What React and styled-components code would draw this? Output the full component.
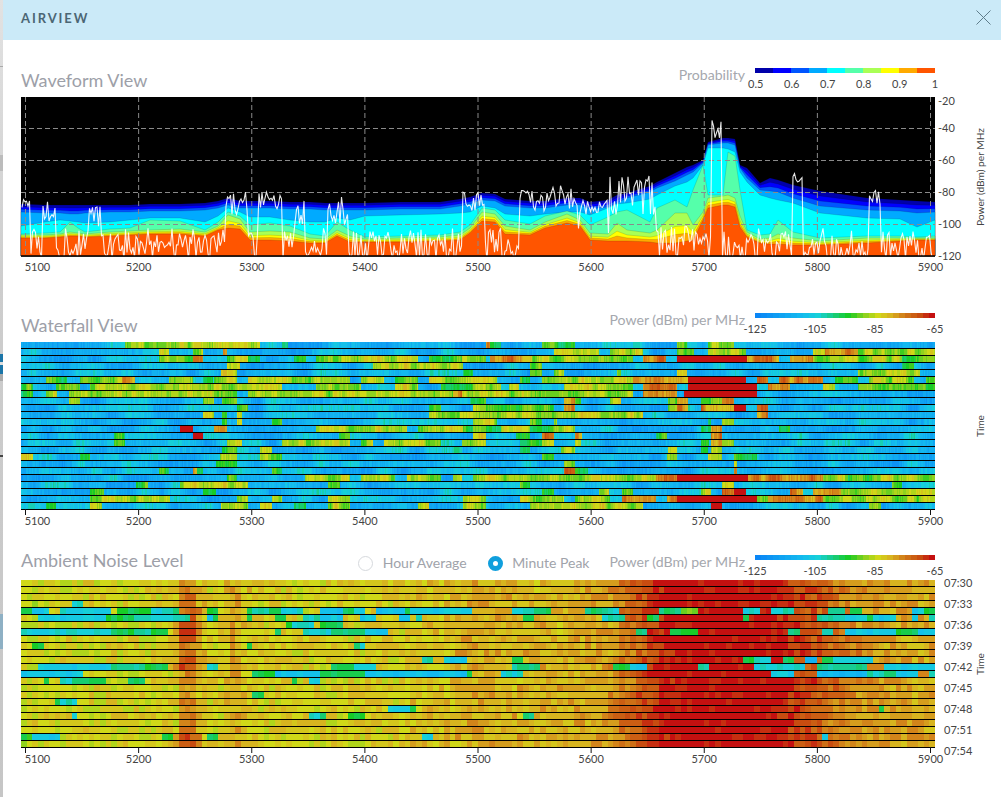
import React from 'react';
import styled, { createGlobalStyle } from 'styled-components';

const GlobalStyle = createGlobalStyle`
  html, body {
    margin: 0;
    background: #fff;
    overflow: hidden;
  }
  body {
    font-family: Lato, "Open Sans", sans-serif;
  }
`;

const Page = styled.div`
  display: flex;
  width: 1001px;
  height: 797px;
  overflow: hidden;
`;

const Backdrop = styled.div`
  width: 3px;
  flex: none;
  display: flex;
  flex-direction: column;
  background: linear-gradient(#e2e2e2, #cdcdcd 35%, #c6c6c6);
`;

const BackdropMark = styled.div`
  height: ${(p) => p.$h}px;
  flex: none;
  background: ${(p) => p.$c || 'transparent'};
`;

const Modal = styled.div`
  flex: 1;
  background: #fff;
`;

const TopBar = styled.header`
  height: 40px;
  box-sizing: border-box;
  display: flex;
  align-items: center;
  justify-content: space-between;
  padding: 0 10px 5px 18px;
  background: #cbeaf8;
`;

const TopTitle = styled.h1`
  margin: 0;
  font-size: 13px;
  font-weight: 700;
  letter-spacing: 1.9px;
  color: #4b6674;
`;

const CloseIcon = styled.svg`
  width: 15px;
  height: 15px;
  stroke: #5f7d8b;
  stroke-width: 1;
  fill: none;
  display: block;
`;

const Section = styled.section`
  padding-left: 18px;
  padding-top: ${(p) => p.$top}px;
`;

const SectionHead = styled.div`
  width: 914px;
  height: ${(p) => p.$h}px;
  display: flex;
  align-items: flex-start;
`;

const SectionTitle = styled.h2`
  flex: 1;
  align-self: flex-end;
  margin: 0 0 ${(p) => p.$low}px;
  font-size: 18px;
  line-height: 22px;
  font-weight: 400;
  color: #9da0a8;
`;

const RadioGroup = styled.div`
  align-self: flex-end;
  display: flex;
  align-items: center;
  margin: 0 20px 9px 0;
`;

const RadioLabel = styled.label`
  display: flex;
  align-items: center;
  gap: 9.5px;
  margin-left: 21px;
  font-size: 14px;
  line-height: 16px;
  color: #a0a3aa;
`;

const RadioDot = styled.span`
  width: 15px;
  height: 15px;
  box-sizing: border-box;
  border-radius: 50%;
  background: #fff;
  border: ${(p) => (p.$on ? '5px solid #109fdd' : '1px solid #d6d9dd')};
`;

const LegendCaption = styled.span`
  margin-right: 10px;
  font-size: 14.1px;
  line-height: 14px;
  color: #a5a8ae;
`;

const Legend = styled.div`
  width: 180px;
  flex: none;
  display: flex;
  flex-direction: column;
  gap: 4px;
`;

const LegendBar = styled.div`
  display: flex;
  height: 5px;
`;

const LegendStep = styled.span`
  flex: 1;
  background: ${(p) => p.$c};
`;

const LegendTicks = styled.div`
  display: flex;
  justify-content: space-between;
  margin: 0 -${(p) => p.$w / 2}px;
`;

const LegendTick = styled.span`
  width: ${(p) => p.$w}px;
  text-align: center;
  font-size: 11px;
  line-height: 14px;
  color: #444;
`;

const ChartSvg = styled.svg`
  display: block;
  width: 970px;
  height: 190px;
  overflow: visible;
`;

const AxisText = styled.text`
  font-size: ${(p) => p.$size || 11}px;
  fill: #444;
  text-anchor: ${(p) => p.$anchor || 'middle'};
  dominant-baseline: middle;
`;

const noise = (a, b = 0) => {
  const v = Math.sin(a * 127.1 + b * 311.7 + 17.3) * 43758.5453;
  return v - Math.floor(v);
};

const smooth = (x, size, seed) => {
  const p = x / size;
  const i = Math.floor(p);
  const f = p - i;
  const s = f * f * (3 - 2 * f);
  return noise(i, seed) * (1 - s) + noise(i + 1, seed) * s;
};

const lerpPoints = (pts, x) => {
  if (x <= pts[0][0]) return pts[0][1];
  for (let i = 1; i < pts.length; i += 1) {
    if (x <= pts[i][0]) {
      const [x0, y0] = pts[i - 1];
      const [x1, y1] = pts[i];
      return y0 + ((y1 - y0) * (x - x0)) / (x1 - x0);
    }
  }
  return pts[pts.length - 1][1];
};

const hex = (c) => [1, 3, 5].map((i) => parseInt(c.slice(i, i + 2), 16));

const heatStops = [
  [0, '#0a86f6'], [7.5, '#14bcee'], [10, '#16d0d8'], [13, '#18cc70'], [15.2, '#18cc20'],
  [17.5, '#80d020'], [20, '#d0d818'], [22.2, '#d8b020'], [24.5, '#d07818'], [27, '#c84c10'],
  [29, '#c41010'],
];

const HEAT = Array.from({ length: 30 }, (_, i) => {
  let k = 1;
  while (k < heatStops.length - 1 && heatStops[k][0] < i) k += 1;
  const [a, ca] = heatStops[k - 1];
  const [b, cb] = heatStops[k];
  const t = (i - a) / (b - a);
  const [c0, c1] = [hex(ca), hex(cb)];
  return `rgb(${c0.map((v, j) => Math.round(v + (c1[j] - v) * t)).join(',')})`;
});

const PROB = ['#0000aa', '#0000ff', '#0055ff', '#00aaff', '#00ffff', '#55ffaa', '#aaff55', '#ffff00', '#ffaa00', '#ff5500'];

const LEVEL = { t: 10.5, g: 15.5, y: 18.5, o: 24, r: 28.6, c: 8.5 };

// [from px, to px, level] per row, everything else is the cold background
const waterfallRows = [
  [[124, 259, 'y'], [282, 287, 'g'], [485, 490, 'o'], [490, 500, 'g'], [542, 575, 'g'], [632, 642, 't'], [677, 687, 'g'], [707, 733, 'y']],
  [[158, 169, 'y'], [192, 203, 'y'], [223, 226, 'o'], [553, 598, 'y'], [610, 643, 'y'], [677, 693, 'g'], [707, 745, 'y'], [812, 825, 'y'], [825, 857, 'o'], [857, 935, 'y']],
  [[158, 169, 'y'], [169, 192, 'g'], [192, 203, 'o'], [226, 248, 'y'], [248, 259, 'g'], [293, 305, 'g'], [316, 417, 'y'], [429, 462, 'g'], [462, 485, 'y'], [490, 532, 'o'], [532, 632, 'y'], [643, 665, 'o'], [677, 747, 'r'], [747, 778, 'o'], [790, 812, 'o'], [812, 902, 'y'], [902, 935, 'g']],
  [[226, 240, 'y'], [372, 463, 'y'], [530, 542, 'y'], [902, 913, 'g']],
  [[221, 237, 'y'], [463, 473, 'g'], [530, 542, 'g'], [553, 563, 'y'], [617, 620, 'y'], [677, 687, 'y'], [857, 920, 'y']],
  [[45, 67, 'g'], [79, 100, 'g'], [100, 121, 'y'], [121, 135, 'o'], [169, 192, 'y'], [203, 213, 'g'], [214, 237, 'y'], [248, 350, 'y'], [361, 383, 'y'], [395, 417, 'g'], [429, 497, 'y'], [519, 530, 'g'], [542, 632, 'y'], [632, 655, 'o'], [655, 677, 'o'], [677, 688, 'o'], [688, 745, 'r'], [757, 767, 'o'], [778, 823, 'o'], [835, 858, 'g'], [869, 913, 'y'], [925, 935, 'y']],
  [[21, 33, 'g'], [56, 79, 'y'], [90, 282, 'y'], [316, 361, 'y'], [395, 417, 'y'], [440, 473, 'g'], [473, 500, 'y'], [508, 518, 'y'], [563, 620, 'y'], [620, 632, 'g'], [643, 677, 'o'], [688, 757, 'r'], [767, 790, 'o'], [823, 835, 'y'], [858, 925, 'y'], [925, 935, 'g']],
  [[21, 33, 'g'], [45, 57, 'y'], [68, 237, 'y'], [248, 452, 'y'], [452, 462, 'o'], [462, 632, 'y'], [643, 677, 'o'], [683, 757, 'r']],
  [[68, 79, 'g'], [203, 214, 'y'], [222, 237, 'g'], [470, 485, 'g'], [563, 575, 'o'], [575, 580, 'g'], [610, 620, 'y'], [667, 677, 'g'], [677, 688, 'o'], [700, 710, 'g'], [711, 722, 'y'], [722, 733, 'o']],
  [[237, 248, 'g'], [429, 440, 'g'], [473, 485, 'y'], [485, 500, 'g'], [500, 553, 'g'], [563, 575, 'o'], [667, 677, 'y'], [677, 688, 'o'], [700, 733, 'o'], [733, 745, 'r'], [757, 767, 'o']],
  [[203, 214, 'y'], [222, 226, 'g'], [237, 241, 'y'], [429, 643, 'y'], [757, 767, 'o']],
  [[222, 226, 'g'], [237, 241, 'y'], [271, 282, 'g'], [473, 497, 'y'], [530, 542, 'g'], [553, 557, 'y'], [707, 711, 'g'], [722, 733, 'y']],
  [[180, 192, 'r'], [214, 226, 'o'], [316, 406, 'y'], [417, 463, 'y'], [463, 473, 'g'], [473, 485, 'y'], [485, 500, 'g'], [500, 530, 'y'], [530, 553, 'g'], [553, 575, 'y'], [700, 710, 'g'], [711, 722, 'o'], [778, 790, 'g']],
  [[192, 203, 'r'], [113, 124, 'g'], [338, 350, 'g'], [473, 485, 'y'], [516, 530, 'g'], [542, 553, 'o'], [575, 582, 'o'], [655, 666, 'g'], [711, 722, 'o']],
  [[113, 124, 'g'], [226, 241, 'y'], [282, 350, 'y'], [361, 372, 'y'], [383, 440, 'y'], [462, 485, 'y'], [519, 542, 'g'], [542, 553, 'y'], [575, 580, 'y'], [700, 708, 'g'], [711, 722, 'o'], [722, 733, 'y']],
  [[222, 237, 'g'], [259, 271, 'y'], [452, 462, 't'], [519, 530, 'g'], [560, 575, 'y'], [667, 677, 'y'], [700, 707, 'g'], [711, 722, 'y']],
  [[21, 33, 'y'], [79, 90, 'g'], [220, 237, 'y'], [259, 282, 'y'], [542, 553, 'g'], [666, 677, 'y'], [707, 722, 'y'], [733, 757, 'g']],
  [[215, 237, 'g'], [563, 575, 'y'], [733, 737, 'y']],
  [[158, 169, 'g'], [192, 197, 'o'], [197, 203, 'g'], [271, 282, 'g'], [563, 575, 'o'], [575, 587, 'g'], [733, 737, 'o']],
  [[226, 237, 'g'], [304, 350, 'y'], [361, 395, 'y'], [406, 440, 'y'], [452, 462, 'y'], [473, 655, 'y'], [655, 677, 'o'], [677, 748, 'r'], [748, 823, 'o'], [823, 847, 'y'], [847, 880, 'g'], [880, 935, 'y']],
  [[136, 147, 'g'], [180, 248, 'y'], [327, 339, 'g'], [519, 530, 'g'], [722, 733, 'y'], [892, 902, 'g']],
  [[90, 103, 'g'], [203, 215, 'g'], [542, 553, 'g'], [598, 609, 'y'], [621, 632, 'g'], [700, 711, 'y'], [722, 733, 'o'], [733, 745, 'r'], [790, 802, 'o'], [812, 840, 'o'], [840, 935, 'y']],
  [[90, 170, 'y'], [237, 248, 'y'], [271, 282, 'y'], [327, 350, 'y'], [463, 485, 'y'], [519, 563, 'y'], [575, 610, 'y'], [621, 655, 'o'], [666, 677, 'o'], [677, 757, 'r'], [757, 767, 'y'], [767, 823, 'o'], [823, 935, 'y']],
  [[45, 56, 'g'], [90, 102, 'y'], [221, 248, 'y'], [259, 271, 'y'], [293, 305, 'g'], [327, 350, 'y'], [417, 429, 'y'], [463, 485, 'y'], [530, 643, 'y'], [711, 722, 'r'], [869, 880, 'y']],
];

// overrides on the warm background of the ambient chart: [from px, to px, level index]
const ambientCold = {
  3: [[67, 78, 10], [78, 83, 14]],
  4: [[21, 32, 14], [32, 44, 9], [55, 65, 11], [65, 110, 9], [112, 146, 14], [146, 170, 10], [170, 176, 14], [203, 213, 14], [242, 248, 14], [250, 265, 11], [265, 275, 14], [275, 300, 10], [315, 337, 8], [337, 350, 14], [350, 360, 9], [373, 400, 8], [400, 405, 14], [407, 470, 9], [510, 530, 11], [530, 547, 13], [583, 600, 13], [600, 617, 11], [657, 680, 13], [680, 697, 17], [742, 760, 10], [770, 793, 11], [827, 840, 11], [850, 860, 14], [907, 920, 9], [920, 930, 14]],
  5: [[33, 38, 11], [38, 100, 9], [100, 130, 14], [130, 160, 10], [160, 190, 11], [203, 210, 9], [210, 217, 14], [242, 248, 14], [270, 285, 14], [300, 316, 11], [316, 340, 9], [355, 372, 9], [396, 407, 9], [412, 420, 11], [520, 532, 14], [600, 622, 11], [647, 657, 14], [742, 748, 14], [815, 840, 11], [843, 862, 9], [862, 872, 14], [872, 895, 9], [907, 918, 9], [925, 935, 11]],
  6: [[283, 290, 14], [288, 313, 10], [316, 338, 14]],
  7: [[21, 32, 11], [32, 106, 10], [106, 130, 14], [130, 146, 11], [146, 165, 14], [272, 280, 14], [298, 330, 10], [330, 360, 12], [360, 385, 9], [633, 640, 14], [640, 645, 11], [668, 697, 15], [700, 703, 14], [783, 798, 12], [817, 833, 11], [843, 895, 9], [895, 917, 14], [918, 935, 9]],
  8: [[38, 43, 14]],
  9: [[32, 38, 14], [38, 43, 10], [242, 248, 14], [350, 355, 14], [355, 362, 9]],
  11: [[418, 430, 11], [441, 463, 9], [510, 520, 14], [742, 752, 14], [752, 770, 10], [782, 793, 13], [805, 815, 7], [817, 830, 14], [830, 872, 10]],
  12: [[33, 110, 9], [110, 145, 12], [145, 165, 14], [203, 213, 11], [328, 350, 14], [350, 373, 10], [510, 537, 12], [612, 625, 14], [625, 645, 9], [697, 708, 11], [753, 800, 10], [815, 867, 12], [883, 930, 9]],
  13: [[21, 78, 9], [250, 270, 14], [270, 317, 8], [317, 338, 14], [338, 362, 15], [362, 463, 8], [463, 469, 14], [500, 520, 10], [770, 793, 9], [815, 863, 7], [863, 883, 11], [883, 895, 14], [895, 918, 9], [925, 935, 11]],
  14: [[38, 44, 14], [55, 70, 11], [70, 100, 14], [123, 145, 14], [288, 293, 14], [305, 316, 9]],
  16: [[248, 259, 14]],
  17: [[50, 60, 14], [60, 72, 11]],
  18: [[384, 407, 9], [407, 412, 14], [873, 883, 14]],
  19: [[67, 72, 11], [72, 77, 9], [305, 316, 10], [316, 322, 14], [345, 362, 14], [520, 532, 13]],
  22: [[21, 32, 15], [32, 55, 9], [55, 60, 14], [157, 169, 14], [203, 213, 14], [418, 430, 10], [817, 827, 9]],
};

const ambientBase = [
  [21, 20], [150, 20.3], [170, 21], [174, 24], [180, 27.5], [192, 27.5], [198, 23], [205, 20.3], [222, 21],
  [230, 23], [245, 21], [300, 20.5], [400, 21], [440, 21.5], [470, 22.5], [500, 22], [560, 22], [610, 23],
  [630, 25.5], [650, 27.5], [668, 29.5], [770, 29.5], [790, 28], [815, 26.5], [840, 24.5], [870, 23], [935, 22.5],
];

const clampIndex = (v) => Math.max(0, Math.min(29, Math.round(v)));

const waterfallCell = (row, x) => {
  const seg = waterfallRows[row].find(([a, b]) => x >= a && x < b);
  const grain = noise(x, row + 3) - 0.5;
  if (!seg) {
    return clampIndex(2.5 + smooth(x, 16, row + 40) * 8 + grain * 3);
  }
  const lvl = LEVEL[seg[2]];
  if (seg[2] === 'r') return clampIndex(29);
  const block = smooth(x, 7, row + 80) - 0.5;
  return clampIndex(lvl + block * 5.5 + grain * 2);
};

const ambientCell = (row, x) => {
  const seg = (ambientCold[row] || []).find(([a, b]) => x >= a && x < b);
  const grain = noise(x, row + 91) - 0.5;
  if (seg) return clampIndex(seg[2] + grain * 2);
  const edge = (smooth(row, 2, 5) - 0.5) * 26;
  const base = lerpPoints(ambientBase, x + (x > 600 ? edge : 0));
  // the 5240 column is not equally hot in every row
  const cool = x > 172 && x < 198 ? noise(row, 3) * 4 : 0;
  return clampIndex(base - cool + grain * 3.2);
};

// one path per colour, a lot lighter than a rect per cell
const buildHeatPaths = (cols, cellWidth, cellFor) => {
  const paths = {};
  for (let row = 0; row < 24; row += 1) {
    let start = 0;
    let current = cellFor(row, 21);
    for (let c = 1; c <= cols; c += 1) {
      const x = 21 + c * cellWidth;
      const next = c < cols ? cellFor(row, x) : -1;
      if (next !== current) {
        const x0 = Math.round(21 + start * cellWidth);
        const w = Math.round(x) - x0;
        if (w > 0) {
          paths[current] = `${paths[current] || ''}M${x0} ${row * 7}h${w}v6h-${w}z`;
        }
        start = c;
        current = next;
      }
    }
  }
  return Object.entries(paths);
};

const waterfallPaths = buildHeatPaths(808, 914 / 808, waterfallCell);
const ambientPaths = buildHeatPaths(162, 914 / 162, ambientCell);

// x, then tops of: dark blue, #00aaff, cyan, #55ffaa, #aaff55, #ff5500
const waveBands = [
  [21, 204, 212, 226, 234, 235, 238], [45, 205, 213, 222, 233, 235, 238], [60, 205, 213, 220, 232, 234, 237],
  [70, 205, 214, 221, 222, 232, 236], [78, 205, 214, 222, 228, 233, 236], [85, 205, 213, 223, 232, 234, 237],
  [110, 205, 212, 222, 229, 232, 236], [130, 205, 212, 220, 228, 231, 235], [150, 204, 211, 218, 220, 230, 234],
  [180, 204, 211, 218, 221, 229, 234], [205, 203, 210, 222, 230, 232, 236], [218, 201, 208, 216, 222, 226, 230],
  [228, 198, 205, 208, 212, 215, 228], [240, 201, 208, 212, 216, 219, 229], [250, 201, 208, 217, 225, 232, 240],
  [270, 201, 208, 217, 223, 231, 240], [290, 202, 209, 220, 226, 232, 241], [310, 202, 209, 222, 234, 238, 243],
  [325, 203, 210, 222, 236, 239, 243], [337, 203, 210, 218, 222, 230, 236], [350, 203, 210, 220, 230, 236, 242],
  [365, 203, 210, 216, 237, 239, 242], [400, 202, 209, 215, 236, 238, 242], [440, 202, 209, 214, 235, 237, 241],
  [460, 199, 206, 213, 232, 235, 240], [470, 197, 204, 212, 225, 228, 233], [482, 193, 200, 206, 208, 212, 221],
  [495, 194, 201, 208, 210, 214, 222], [505, 199, 206, 214, 220, 226, 234], [530, 201, 208, 216, 224, 230, 235],
  [545, 201, 208, 214, 216, 222, 228], [567, 198, 205, 212, 211, 214, 223], [580, 198, 205, 212, 215, 220, 226],
  [590, 202, 209, 215, 225, 233, 240], [608, 200, 207, 208, 217, 234, 241], [617, 195, 203, 204, 212, 223, 241],
  [627, 193, 198, 203, 210, 230, 241], [650, 186, 192, 199, 222, 233, 242], [657, 182, 188, 195, 208, 230, 243],
  [675, 173, 181, 186, 200, 213, 243], [687, 167, 175, 182, 207, 213, 241], [693, 165, 172, 178, 190, 225, 240],
  [703, 160, 163, 165, 165, 212, 220], [708, 142, 145, 148, 195, 198, 208], [723, 138, 143, 148, 195, 196, 205],
  [728, 138, 143, 149, 152, 195, 205], [735, 139, 145, 152, 156, 198, 207], [740, 165, 168, 172, 190, 216, 227],
  [747, 168, 178, 182, 230, 232, 237], [760, 183, 190, 195, 235, 239, 243], [770, 178, 191, 198, 234, 238, 244],
  [778, 180, 192, 200, 220, 234, 244], [793, 185, 198, 203, 232, 238, 245], [820, 191, 206, 213, 238, 241, 245],
  [867, 198, 210, 218, 236, 238, 243], [900, 200, 211, 219, 236, 238, 241], [917, 201, 213, 227, 237, 238, 240],
  [935, 202, 212, 220, 236, 238, 240],
];

const bandMix = [
  [0, 0], [0, 1 / 3], [0, 2 / 3], [1, 0], [2, 0], [3, 0], [4, 0], [4, 0.45], [4, 0.72], [4, 1],
];

const bandPolygon = ([from, mix]) => {
  const top = waveBands.map(([x, ...edges]) => {
    let y;
    if (from === 4) y = edges[4] + (edges[5] - edges[4]) * mix;
    else if (from === 0 && mix > 0) y = edges[0] + (edges[1] - edges[0]) * mix;
    else y = edges[from];
    return `${x},${(y - 97).toFixed(1)}`;
  });
  return `21,159 ${top.join(' ')} 935,159`;
};

const peakRanges = [
  [22, 30, 196, 208], [43, 55, 200, 225], [89, 100, 202, 232], [225, 248, 192, 215], [259, 282, 192, 212],
  [294, 304, 198, 225], [327, 348, 195, 225], [463, 485, 192, 212], [520, 578, 185, 212], [580, 608, 200, 215],
  [609, 655, 175, 215], [711, 722, 115, 140], [792, 802, 170, 185], [869, 880, 190, 205],
];

const tracePoints = () => {
  const pts = [];
  for (let x = 22; x < 934; x += 1.5) {
    const peak = peakRanges.find(([a, b]) => x >= a && x <= b);
    const r = noise(x, 7);
    let y;
    if (peak) {
      y = peak[2] + (peak[3] - peak[2]) * r;
    } else if (x > 655 && x < 705) {
      y = 226 + r * 30;
    } else {
      y = 228 + r * 34;
    }
    pts.push(`${x.toFixed(1)},${(y - 97).toFixed(1)}`);
  }
  return pts.join(' ');
};

const trace = tracePoints();

const FREQS = [5100, 5200, 5300, 5400, 5500, 5600, 5700, 5800, 5900];
const freqX = (f) => 25.5 + (f - 5100) * 1.13125;

const FreqAxis = ({ y, ticks }) => (
  <>
    {ticks && FREQS.map((f) => (
      <line key={f} x1={freqX(f)} x2={freqX(f)} y1={y - 1} y2={y + 5} stroke="#111" />
    ))}
    {FREQS.map((f) => (
      <AxisText key={f} x={f === 5100 ? 37.5 : freqX(f)} y={y + 12}>{f}</AxisText>
    ))}
  </>
);

const HeatRows = ({ paths }) => (
  <>
    <rect x="21" y="0" width="914" height="168" fill="#000" />
    {paths.map(([idx, d]) => (
      <path key={idx} d={d} fill={HEAT[idx]} shapeRendering="crispEdges" />
    ))}
  </>
);

const SideTitle = ({ y, size, children }) => (
  <AxisText x={981} y={y} $size={size} transform={`rotate(-90 981 ${y})`}>{children}</AxisText>
);

const WaveformChart = () => (
  <ChartSvg viewBox="21 0 970 190">
    <rect x="21" y="0" width="914" height="159" fill="#000" />
    {bandMix.map((b, i) => (
      <polygon key={PROB[i]} points={bandPolygon(b)} fill={PROB[i]} stroke="rgba(0,0,0,.22)" strokeWidth=".6" />
    ))}
    {FREQS.map((f) => (
      <line key={f} x1={freqX(f)} x2={freqX(f)} y1="0" y2="159" stroke="#8a8a8a" strokeDasharray="5 3" />
    ))}
    {[31.5, 63.5, 95.5, 127.5].map((y) => (
      <line key={y} x1="21" x2="935" y1={y} y2={y} stroke="#8a8a8a" strokeDasharray="5 3" />
    ))}
    <svg x="21" y="0" width="914" height="159" viewBox="21 0 914 159">
      <polyline points={trace} fill="none" stroke="#fff" strokeWidth="1.1" strokeOpacity=".9" />
    </svg>
    <line x1="21" x2="935" y1="159" y2="159" stroke="#000" strokeWidth="1.5" />
    <FreqAxis y={159} />
    {[['-20', 5], ['-40', 32], ['-60', 64], ['-80', 96], ['-100', 128], ['-120', 160]].map(([t, y]) => (
      <AxisText key={t} x={938} y={y} $anchor="start">{t}</AxisText>
    ))}
    <SideTitle y={80} size={10.2}>Power (dBm) per MHz</SideTitle>
  </ChartSvg>
);

const WaterfallChart = () => (
  <ChartSvg viewBox="21 0 970 190">
    <HeatRows paths={waterfallPaths} />
    <FreqAxis y={168} ticks />
    <SideTitle y={84} size={10}>Time</SideTitle>
  </ChartSvg>
);

const AMBIENT_TIMES = ['07:30', '07:33', '07:36', '07:39', '07:42', '07:45', '07:48', '07:51', '07:54'];

const AmbientChart = () => (
  <ChartSvg viewBox="21 0 970 190">
    <HeatRows paths={ambientPaths} />
    <FreqAxis y={168} ticks />
    {AMBIENT_TIMES.map((t, i) => (
      <AxisText key={t} x={944} y={4 + i * 21} $anchor="start">{t}</AxisText>
    ))}
    <SideTitle y={84} size={10}>Time</SideTitle>
  </ChartSvg>
);

const ProbabilityLegend = () => (
  <>
    <LegendCaption>Probability</LegendCaption>
    <Legend>
      <LegendBar>{PROB.map((c) => <LegendStep key={c} $c={c} />)}</LegendBar>
      <LegendTicks $w={14}>
        {['0.5', '0.6', '0.7', '0.8', '0.9', '1'].map((t) => <LegendTick key={t} $w={14}>{t}</LegendTick>)}
      </LegendTicks>
    </Legend>
  </>
);

const PowerLegend = () => (
  <>
    <LegendCaption>Power (dBm) per MHz</LegendCaption>
    <Legend>
      <LegendBar>{HEAT.map((c) => <LegendStep key={c} $c={c} />)}</LegendBar>
      <LegendTicks $w={30}>
        {['-125', '-105', '-85', '-65'].map((t) => <LegendTick key={t} $w={30}>{t}</LegendTick>)}
      </LegendTicks>
    </Legend>
  </>
);

const backdropMarks = [
  [66, ''], [1, '#aaa'], [88, ''], [16, '#bcbcbc'], [183, ''], [8, '#1b75a8'], [3, '#ddd'], [9, '#1b75a8'],
  [7, '#aaa'], [74, ''], [2, '#444'], [157, ''], [35, '#8eb0c4'],
];

export default function App() {
  return (
    <Page>
      <GlobalStyle />
      <Backdrop>
        {backdropMarks.map(([h, c], i) => <BackdropMark key={i} $h={h} $c={c} />)}
      </Backdrop>
      <Modal>
        <TopBar>
          <TopTitle>AIRVIEW</TopTitle>
          <CloseIcon viewBox="0 0 15 15">
            <path d="M.5.5l14 14M14.5.5l-14 14" />
          </CloseIcon>
        </TopBar>

        <Section $top={28}>
          <SectionHead $h={29}>
            <SectionTitle $low={6}>Waveform View</SectionTitle>
            <ProbabilityLegend />
          </SectionHead>
          <WaveformChart />
        </Section>

        <Section $top={26}>
          <SectionHead $h={29}>
            <SectionTitle $low={6}>Waterfall View</SectionTitle>
            <PowerLegend />
          </SectionHead>
          <WaterfallChart />
        </Section>

        <Section $top={23}>
          <SectionHead $h={25}>
            <SectionTitle $low={9}>Ambient Noise Level</SectionTitle>
            <RadioGroup>
              <RadioLabel><RadioDot />Hour Average</RadioLabel>
              <RadioLabel><RadioDot $on />Minute Peak</RadioLabel>
            </RadioGroup>
            <PowerLegend />
          </SectionHead>
          <AmbientChart />
        </Section>
      </Modal>
    </Page>
  );
}
